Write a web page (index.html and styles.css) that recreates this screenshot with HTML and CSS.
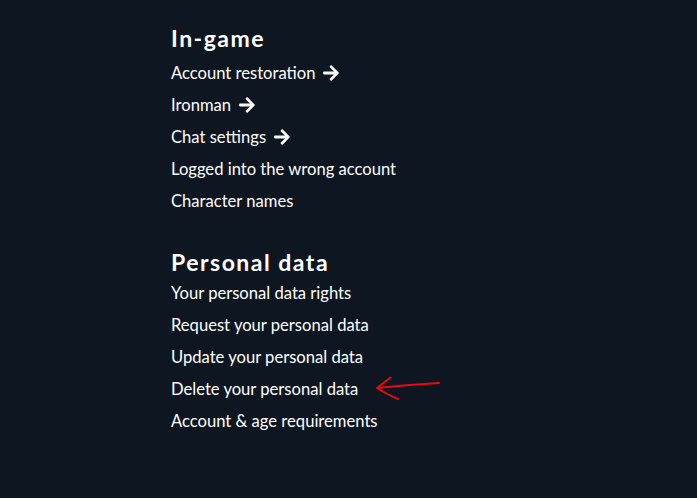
FILE: index.html
```html
<!DOCTYPE html>
<html lang="en">
<head>
    <meta charset="UTF-8">
    <meta name="viewport" content="width=device-width, initial-scale=1.0">
    <title>Help topics</title>
    <link rel="stylesheet" href="styles.css">
</head>

<body>
    <main class="topics">
        <section class="group group-first">
            <h2>In-game</h2>
            <ul class="links">
                <li><a href="#">Account restoration <svg class="go" viewBox="0 0 448 512"><path d="M190.5 66.9l22.2-22.2c9.4-9.4 24.6-9.4 33.9 0L441 239c9.4 9.4 9.4 24.6 0 33.9L246.6 467.3c-9.4 9.4-24.6 9.4-33.9 0l-22.2-22.2c-9.5-9.5-9.3-25 .4-34.3L311.4 296H24c-13.3 0-24-10.7-24-24v-32c0-13.3 10.7-24 24-24h287.4L190.9 101.2c-9.8-9.3-10-24.8-.4-34.3z"/></svg></a></li>
                <li><a href="#">Ironman <svg class="go" viewBox="0 0 448 512"><path d="M190.5 66.9l22.2-22.2c9.4-9.4 24.6-9.4 33.9 0L441 239c9.4 9.4 9.4 24.6 0 33.9L246.6 467.3c-9.4 9.4-24.6 9.4-33.9 0l-22.2-22.2c-9.5-9.5-9.3-25 .4-34.3L311.4 296H24c-13.3 0-24-10.7-24-24v-32c0-13.3 10.7-24 24-24h287.4L190.9 101.2c-9.8-9.3-10-24.8-.4-34.3z"/></svg></a></li>
                <li><a href="#">Chat settings <svg class="go" viewBox="0 0 448 512"><path d="M190.5 66.9l22.2-22.2c9.4-9.4 24.6-9.4 33.9 0L441 239c9.4 9.4 9.4 24.6 0 33.9L246.6 467.3c-9.4 9.4-24.6 9.4-33.9 0l-22.2-22.2c-9.5-9.5-9.3-25 .4-34.3L311.4 296H24c-13.3 0-24-10.7-24-24v-32c0-13.3 10.7-24 24-24h287.4L190.9 101.2c-9.8-9.3-10-24.8-.4-34.3z"/></svg></a></li>
                <li><a href="#">Logged into the wrong account</a></li>
                <li><a href="#">Character names</a></li>
            </ul>
        </section>
        <section class="group">
            <h2>Personal data</h2>
            <ul class="links">
                <li><a href="#">Your personal data rights</a></li>
                <li><a href="#">Request your personal data</a></li>
                <li><a href="#">Update your personal data</a></li>
                <li class="marked">
                    <a href="#">Delete your personal data</a>
                    <!-- hand-drawn pointer -->
                    <svg class="pointer" viewBox="0 0 70 28" width="70" height="28">
                        <path d="M68 6 C50 7 25 9 6 11 M6 11 C10 8 15 4 20 0 M6 11 C12 15 20 19 27 22"/>
                    </svg>
                </li>
                <li><a href="#">Account &amp; age requirements</a></li>
            </ul>
        </section>
    </main>
</body>

</html>
```

FILE: styles.css
```css
* {
    margin: 0;
    padding: 0;
}

body {
    background-color: #0e1621;
    color: #fff;
    font-family: Lato, "Open Sans", sans-serif;
}

.topics {
    padding: 24px 0 0 171px;
}

.group h2 {
    font-size: 23px;
    line-height: 28px;
    font-weight: 700;
    letter-spacing: 1.5px;
    margin-bottom: 1px;
}

.group-first h2 {
    margin-bottom: 5px;
}

.group-first {
    margin-bottom: 31px;
}

.links {
    list-style: none;
}

.links li {
    font-size: 16.6px;
    line-height: 32px;
    position: relative;
}

.links a {
    color: #fff;
    text-decoration: none;
    display: inline-flex;
    align-items: center;
    gap: 8px;
}

.go {
    width: 16px;
    height: 18px;
    fill: #fff;
}

/* red annotation arrow */
.marked .pointer {
    position: absolute;
    left: 200px;
    top: 4px;
    fill: none;
    stroke: #e8090d;
    stroke-width: 2px;
    stroke-linecap: round;
}
```
